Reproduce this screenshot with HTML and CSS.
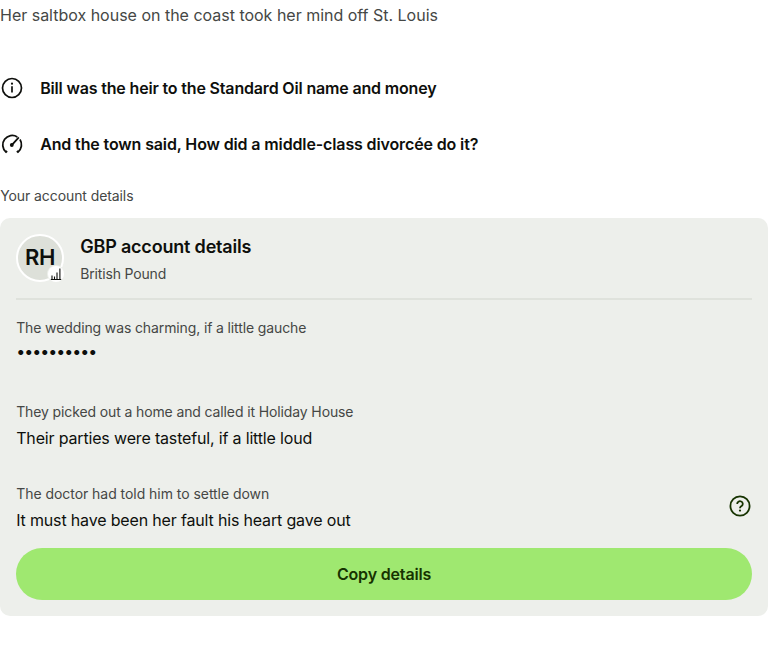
FILE: index.html
```html
<!DOCTYPE html>
<html lang="en">
<head>
<meta charset="utf-8">
<title>Account details</title>
<link rel="stylesheet" href="styles.css">
</head>
<body>
<main class="page">
  <p class="intro">Her saltbox house on the coast took her mind off St. Louis</p>
  <ul class="summary">
    <li class="summary-item">
      <svg class="icon" viewBox="0 0 24 24" fill="none" stroke="currentColor" stroke-width="1.7"><circle cx="12" cy="12" r="9.5"/><path d="M12 10.3v6.2"/><circle cx="12" cy="7.7" r="1.1" fill="currentColor" stroke="none"/></svg>
      <span>Bill was the heir to the Standard Oil name and money</span>
    </li>
    <li class="summary-item summary-item-wide">
      <svg class="icon" viewBox="0 0 24 24" fill="none" stroke="currentColor" stroke-width="1.8"><path d="M7.1 19L6 20.1A9.5 9.5 0 0 1 17.3 4.9M20 7.6A9.5 9.5 0 0 1 18 20.1L16.9 19M12 12.8L18.8 5.4"/><circle cx="11.8" cy="13" r="1.9" fill="currentColor" stroke="none"/></svg>
      <span>And the town said, How did a middle-class divorcée do it?</span>
    </li>
  </ul>
  <h2 class="section-title">Your account details</h2>
  <section class="card">
    <header class="card-header">
      <div class="avatar">RH
        <span class="badge"><svg viewBox="0 0 16 16" fill="none" stroke="currentColor" stroke-width="1.1"><path d="M2.8 13.5h10.4M4 13V9.5M6.5 13v-2.5M9 13V6.5M11.9 13V2.5"/></svg></span>
      </div>
      <div>
        <h3 class="card-title">GBP account details</h3>
        <p class="card-subtitle">British Pound</p>
      </div>
    </header>
    <dl class="details">
      <div class="detail detail-masked">
        <dt>The wedding was charming, if a little gauche</dt>
        <dd>••••••••••</dd>
      </div>
      <div class="detail">
        <dt>They picked out a home and called it Holiday House</dt>
        <dd>Their parties were tasteful, if a little loud</dd>
      </div>
      <div class="detail detail-help">
        <div>
          <dt>The doctor had told him to settle down</dt>
          <dd>It must have been her fault his heart gave out</dd>
        </div>
        <svg class="icon help" viewBox="0 0 24 24" fill="none" stroke="currentColor" stroke-width="1.8"><circle cx="12" cy="12" r="9.6"/><path d="M9.2 10a2.8 2.6 0 1 1 4.5 1.9c-1 .8-1.7 1-1.7 2.3"/><circle cx="12" cy="16.6" r="1.1" fill="currentColor" stroke="none"/></svg>
      </div>
    </dl>
    <button class="copy" type="button">Copy details</button>
  </section>
</main>
</body>
</html>
```

FILE: styles.css
```css
* { box-sizing: border-box; margin: 0; padding: 0; }
body {
  background: #fff;
  color: #0e0f0c;
  font: 400 16px/24px Inter, "Liberation Sans", sans-serif;
}
.page { padding-top: 3px; }
.intro { color: #454745; letter-spacing: -0.01px; }
.summary {
  display: flex;
  flex-direction: column;
  gap: 32px;
  margin-top: 49px;
  list-style: none;
}
.summary-item { display: flex; gap: 16.2px; font-weight: 600; letter-spacing: -0.168px; }
.summary-item-wide { letter-spacing: -0.13px; }
.icon { flex: none; width: 24px; height: 24px; }
.section-title {
  margin-top: 29px;
  padding-left: 0.2px;
  color: #454745;
  font-size: 14px;
  font-weight: 400;
  line-height: 22px;
  letter-spacing: -0.09px;
}
.card {
  margin-top: 11px;
  padding: 16px;
  height: 398px;
  border-radius: 10px;
  background: #edefeb;
}
.card-header {
  display: flex;
  gap: 16.2px;
  height: 66px;
  border-bottom: 2px solid #dfe2dc;
}
.avatar {
  position: relative;
  width: 48px;
  height: 48px;
  border: 2px solid #fff;
  border-radius: 50%;
  background: #dde0d9;
  font-size: 22px;
  font-weight: 600;
  line-height: 43px;
  letter-spacing: -0.4px;
  text-align: center;
}
.badge {
  position: absolute;
  right: -2px;
  bottom: -2px;
  width: 16px;
  height: 16px;
  border-radius: 50%;
  background: #fff;
  box-shadow: 0 0 0 1px #edefeb;
}
.badge svg { display: block; width: 16px; height: 16px; }
.card-title { padding-top: 1px; font-size: 18px; font-weight: 600; line-height: 24px; letter-spacing: -0.19px; }
.card-subtitle { margin-top: 4px; color: #454745; font-size: 14px; line-height: 22px; letter-spacing: -0.16px; }
.details { padding-top: 17px; }
.detail { height: 82px; }
.detail-masked { height: 84px; }
.detail dt { padding-left: 0.2px; color: #454745; font-size: 14px; line-height: 22px; letter-spacing: -0.122px; }
.detail dd { margin-top: 3px; padding-left: 0.2px; letter-spacing: -0.165px; }
.detail-masked dd { margin-top: 0; letter-spacing: -0.99px; }
.detail-help { display: flex; justify-content: space-between; height: 65px; }
.detail-help dt { letter-spacing: -0.045px; }
.help { margin-top: 11px; color: #163300; }
.copy {
  display: block;
  width: 100%;
  height: 52px;
  border: 0;
  border-radius: 26px;
  background: #9fe870;
  color: #163300;
  font: 600 16px/24px Inter, "Liberation Sans", sans-serif;
  letter-spacing: -0.17px;
}
```
